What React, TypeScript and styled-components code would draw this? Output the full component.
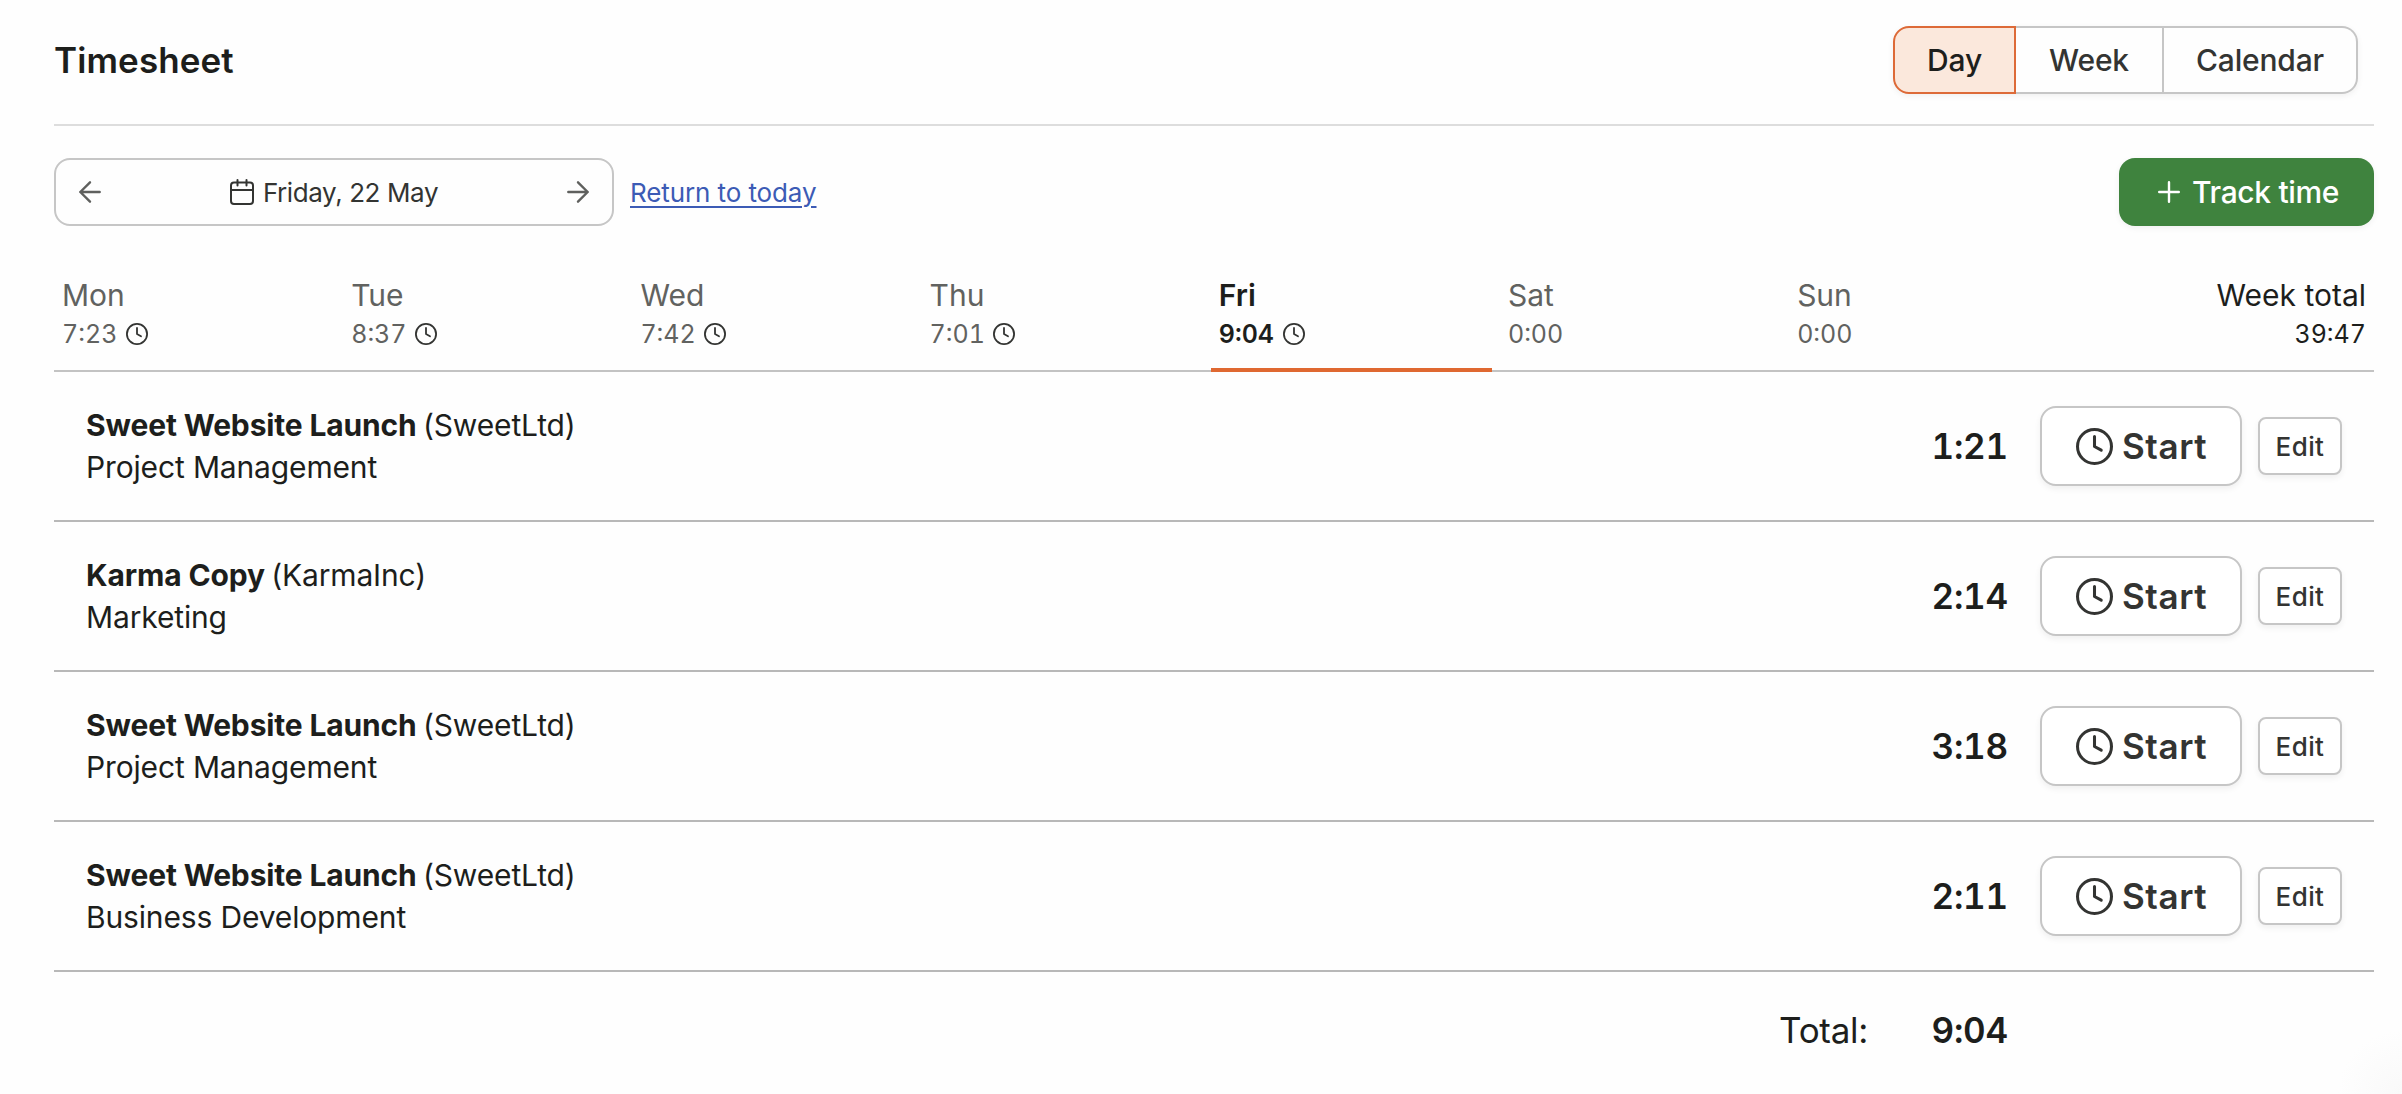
import styled, { createGlobalStyle } from "styled-components";

const GlobalStyle = createGlobalStyle`
  * {
    box-sizing: border-box;
  }

  body {
    margin: 0;
    background: #fefefe;
    color: #1d1e1c;
    font-family: Inter, "Liberation Sans", sans-serif;
  }

  button {
    font-family: inherit;
    margin: 0;
  }
`;

const Page = styled.main`
  height: 1094px;
  padding: 0 28px 0 54px;
  overflow: hidden;
  background: radial-gradient(circle at 100% 100%, #f9f9f9 0, #fefefe 64px);
`;

const Header = styled.header`
  display: flex;
  align-items: flex-start;
  justify-content: space-between;
  height: 126px;
  padding: 26px 16px 0 0;
  border-bottom: 2px solid #dddddd;
`;

const Title = styled.h1`
  margin: 0;
  font-size: 35px;
  line-height: 68px;
  font-weight: 600;
  letter-spacing: 0.1px;
`;

const Segments = styled.div`
  display: flex;
  border-radius: 16px;
  box-shadow: 0 2px 6px rgba(0, 0, 0, 0.06);
`;

const Segment = styled.button<{ $width: number; $active?: boolean }>`
  width: ${({ $width }) => $width}px;
  height: 68px;
  padding: 0;
  border: 2px solid ${({ $active }) => ($active ? "#dd6a38" : "#c6c6c6")};
  border-left-width: ${({ $active }) => ($active ? 2 : 0)}px;
  background: ${({ $active }) => ($active ? "#fbe8dc" : "#fefefe")};
  color: ${({ $active }) => ($active ? "#1d1e1c" : "#333432")};
  font-size: 30px;
  font-weight: 550;
  letter-spacing: -0.2px;

  &:first-child {
    border-radius: 16px 0 0 16px;
  }

  &:last-child {
    border-radius: 0 16px 16px 0;
  }
`;

const Toolbar = styled.div`
  display: flex;
  align-items: center;
  height: 68px;
  margin-top: 32px;
`;

const DateNav = styled.div`
  display: flex;
  align-items: center;
  justify-content: space-between;
  width: 560px;
  height: 68px;
  padding: 0 22px;
  border: 2px solid #c6c6c6;
  border-radius: 16px;
  color: #5f605e;
`;

const DateLabel = styled.span`
  display: flex;
  align-items: center;
  gap: 9px;
  color: #333432;
  font-size: 26px;
  letter-spacing: -0.4px;
`;

const TodayLink = styled.a`
  margin-left: 16px;
  color: #3c5bb5;
  font-size: 26px;
  letter-spacing: -0.1px;
  text-decoration: underline;
  text-decoration-thickness: 2px;
  text-underline-offset: 4px;
`;

const TrackButton = styled.button`
  display: flex;
  align-items: center;
  gap: 12px;
  width: 255px;
  height: 68px;
  margin-left: auto;
  padding: 0 0 0 39px;
  border: 0;
  border-radius: 16px;
  background: #3f833e;
  box-shadow: 0 2px 6px rgba(0, 0, 0, 0.06);
  color: #ffffff;
  font-size: 30px;
  font-weight: 550;
  letter-spacing: -0.35px;
  white-space: nowrap;
`;

const Days = styled.div`
  display: grid;
  grid-template-columns: repeat(7, 281.2px) 1fr;
  column-gap: 8px;
  height: 108px;
  margin-top: 38px;
  border-bottom: 2px solid #c3c3c3;
`;

const Day = styled.div<{ $active?: boolean }>`
  height: 108px;
  padding: 12px 8px 0;
  border-bottom: 4px solid ${({ $active }) => ($active ? "#df6831" : "transparent")};
  color: ${({ $active }) => ($active ? "#1d1e1c" : "#616260")};
  font-weight: ${({ $active }) => ($active ? 600 : 400)};
`;

const WeekTotal = styled.div`
  padding: 12px 8px 0 0;
  text-align: right;
`;

const DayName = styled.div`
  font-size: 30px;
  line-height: 39px;
`;

const DayTime = styled.div`
  display: flex;
  align-items: center;
  gap: 8.5px;
  font-size: 25px;
  line-height: 38px;
  font-variant-numeric: tabular-nums;

  ${WeekTotal} & {
    justify-content: flex-end;
  }
`;

const Row = styled.div`
  display: flex;
  align-items: center;
  height: 150px;
  padding: 0 32px;
  border-bottom: 2px solid #b8b8b8;
`;

const Entry = styled.div`
  flex: 1;
  font-size: 30px;
  line-height: 42px;
  letter-spacing: -0.15px;
`;

const Project = styled.strong`
  margin-right: -2px;
  font-weight: 700;
`;

const Duration = styled.div`
  width: 140px;
  text-align: right;
  font-size: 35px;
  font-weight: 600;
  letter-spacing: -0.2px;
  font-variant-numeric: tabular-nums;
`;

const StartButton = styled.button`
  display: flex;
  align-items: center;
  gap: 9.5px;
  width: 202px;
  height: 80px;
  margin: 0 16px 0 32px;
  padding: 0 0 0 33.5px;
  border: 2px solid #c6c6c6;
  border-radius: 16px;
  background: #ffffff;
  box-shadow: 0 3px 6px rgba(0, 0, 0, 0.06);
  color: #333432;
  font-size: 35px;
  font-weight: 600;
  letter-spacing: 0.6px;
`;

const EditButton = styled.button`
  width: 84px;
  height: 58px;
  padding: 0;
  border: 2px solid #c6c6c6;
  border-radius: 8px;
  background: #ffffff;
  box-shadow: 0 3px 6px rgba(0, 0, 0, 0.06);
  color: #333432;
  font-size: 26px;
  font-weight: 500;
  letter-spacing: 0.4px;
`;

const Footer = styled.div`
  display: flex;
  align-items: center;
  justify-content: flex-end;
  height: 115px;
  padding-right: 366px;
`;

const TotalLabel = styled.div`
  font-size: 35px;
  letter-spacing: -0.3px;
`;

const Stroke = styled.svg`
  display: block;
  flex: none;
  fill: none;
  stroke: currentColor;
  stroke-linecap: round;
  stroke-linejoin: round;
`;

const ClockStroke = styled(Stroke)`
  color: #333432;
`;

function Arrow({ right }: { right?: boolean }) {
  return (
    <Stroke width="24" height="24" viewBox="0 0 24 24" strokeWidth="2.4">
      <path d={right ? "M2.3 12h19.4M12 2.3l9.7 9.7-9.7 9.7" : "M21.7 12H2.3M12 2.3L2.3 12l9.7 9.7"} />
    </Stroke>
  );
}

function CalendarIcon() {
  return (
    <Stroke width="24" height="26" viewBox="0 0 24 26" strokeWidth="2">
      <rect x="1" y="3.5" width="22" height="21.5" rx="3" />
      <path d="M1 11h22M7.5 1v5.5M16.5 1v5.5" />
    </Stroke>
  );
}

function Clock({ size, weight }: { size: number; weight: number }) {
  return (
    <ClockStroke width={size} height={size} viewBox="0 0 22 22" strokeWidth={weight}>
      <circle cx="11" cy="11" r={11 - weight / 2} />
      <path d="M11 5v6l4 2.2" />
    </ClockStroke>
  );
}

const DAYS = [
  { name: "Mon", time: "7:23" },
  { name: "Tue", time: "8:37" },
  { name: "Wed", time: "7:42" },
  { name: "Thu", time: "7:01" },
  { name: "Fri", time: "9:04", active: true },
  { name: "Sat", time: "0:00" },
  { name: "Sun", time: "0:00" },
];

const ENTRIES = [
  { project: "Sweet Website Launch", client: "SweetLtd", task: "Project Management", time: "1:21" },
  { project: "Karma Copy", client: "KarmaInc", task: "Marketing", time: "2:14" },
  { project: "Sweet Website Launch", client: "SweetLtd", task: "Project Management", time: "3:18" },
  { project: "Sweet Website Launch", client: "SweetLtd", task: "Business Development", time: "2:11" },
];

export default function App() {
  return (
    <Page>
      <GlobalStyle />
      <Header>
        <Title>Timesheet</Title>
        <Segments>
          <Segment $width={123} $active>Day</Segment>
          <Segment $width={148}>Week</Segment>
          <Segment $width={194}>Calendar</Segment>
        </Segments>
      </Header>
      <Toolbar>
        <DateNav>
          <Arrow />
          <DateLabel>
            <CalendarIcon />
            Friday, 22 May
          </DateLabel>
          <Arrow right />
        </DateNav>
        <TodayLink>Return to today</TodayLink>
        <TrackButton>
          <Stroke width="22" height="22" viewBox="0 0 22 22" strokeWidth="2.4">
            <path d="M11 1.2v19.6M1.2 11h19.6" />
          </Stroke>
          Track time
        </TrackButton>
      </Toolbar>
      <Days>
        {DAYS.map((d) => (
          <Day key={d.name} $active={d.active}>
            <DayName>{d.name}</DayName>
            <DayTime>
              {d.time}
              {d.time !== "0:00" && <Clock size={22} weight={1.8} />}
            </DayTime>
          </Day>
        ))}
        <WeekTotal>
          <DayName>Week total</DayName>
          <DayTime>39:47</DayTime>
        </WeekTotal>
      </Days>
      {ENTRIES.map((e, i) => (
        <Row key={i}>
          <Entry>
            <div>
              <Project>{e.project}</Project> ({e.client})
            </div>
            <div>{e.task}</div>
          </Entry>
          <Duration>{e.time}</Duration>
          <StartButton>
            <Clock size={37} weight={1.8} />
            Start
          </StartButton>
          <EditButton>Edit</EditButton>
        </Row>
      ))}
      <Footer>
        <TotalLabel>Total:</TotalLabel>
        <Duration>9:04</Duration>
      </Footer>
    </Page>
  );
}
